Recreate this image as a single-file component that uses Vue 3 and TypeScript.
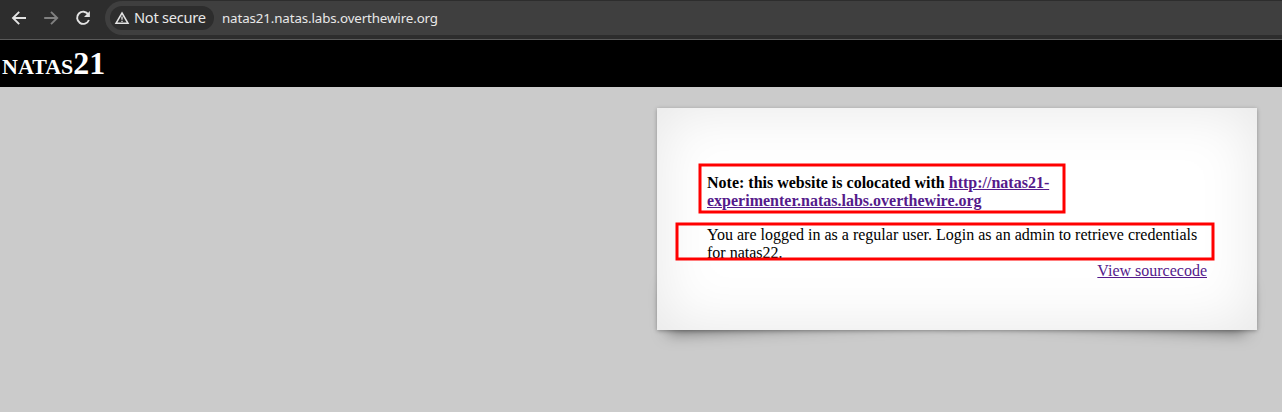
<script setup lang="ts">
const host: string = 'natas21.natas.labs.overthewire.org'
</script>

<template>
  <div class="window">
    <header class="toolbar">
      <svg class="nav" width="105" height="39" viewBox="0 0 105 39" fill="none" stroke-width="1.9">
        <path d="M26 18H13.4M19.2 11.8L13 18l6.2 6.2" stroke="#e3e3e3" />
        <path d="M44.2 18h12.6M51 11.8L57.2 18 51 24.2" stroke="#808080" />
        <path d="M88.3 14.4A6.1 6.1 0 1 0 88.9 20" stroke="#e3e3e3" />
        <path d="M89.9 11v6H84z" fill="#e3e3e3" />
      </svg>
      <div class="omnibox">
        <div class="chip">
          <svg class="warn" width="16" height="14" viewBox="0 0 16 14">
            <path d="M8 2L14 12.3H2z" fill="none" stroke="#e3e3e3" stroke-width="1.5" />
            <path d="M8 5.5v3.3M8 9.8v1.3" stroke="#e3e3e3" stroke-width="1.3" />
          </svg>
          <span class="chip-text">Not secure</span>
        </div>
        <span class="url">{{ host }}</span>
      </div>
    </header>
    <h1>natas21</h1>
    <main>
      <section class="card">
        <p class="note"><b>Note: this website is colocated with </b><a>http://natas21-experimenter.natas.labs.overthewire.org</a></p>
        <div class="status">You are logged in as a regular user. Login as an admin to retrieve credentials for natas22.</div>
        <div class="source"><a>View sourcecode</a></div>
        <svg class="frames" width="600" height="222" fill="none" stroke="#f00" stroke-width="3">
          <rect x="43" y="57" width="364" height="47" />
          <rect x="20" y="116" width="536" height="35" />
        </svg>
      </section>
    </main>
  </div>
</template>

<style>
body { margin: 0; background: #cbcbcb; }
</style>

<style scoped>
.window {
  height: 412px;
  overflow: hidden;
  background: #cbcbcb;
  font: 16px/18px "Liberation Serif", serif;
  color: #000;
}
.toolbar {
  display: flex;
  box-sizing: border-box;
  height: 40px;
  padding-top: 1px;
  background: #2d2d2d;
  border-bottom: 1px solid #5a5a5a;
  overflow: hidden;
}
.nav { flex: none; margin-top: -1px; }
.omnibox {
  display: flex;
  align-items: center;
  flex: 1;
  box-sizing: border-box;
  height: 34px;
  padding-left: 5px;
  background: #3f3f3f;
  border-radius: 17px 0 0 17px;
  font-family: "Noto Sans", sans-serif;
}
.chip {
  display: flex;
  align-items: center;
  box-sizing: border-box;
  width: 104px;
  height: 24px;
  padding-left: 4px;
  border-radius: 12px;
  background: #2d2d2d;
}
.warn { flex: none; }
.chip-text {
  margin-left: 4px;
  font-size: 14.67px;
  letter-spacing: -.28px;
  color: #e8e8e8;
  white-space: nowrap;
  position: relative;
  top: -1px;
}
.url { margin-left: 8px; font-size: 13.33px; letter-spacing: -.12px; color: #e8e8e8; }
h1 {
  box-sizing: border-box;
  height: 47px;
  margin: 0;
  padding: 5px 2px;
  background: #000;
  color: #fff;
  font-size: 32px;
  line-height: 37px;
  font-variant: small-caps;
}
main {
  position: relative;
  z-index: 0;
  display: flex;
  justify-content: flex-end;
  padding: 21px 25px 0 0;
}
.card {
  position: relative;
  width: 500px;
  height: 122px;
  padding: 50px;
  background: #fff;
  box-shadow: 0 1px 4px rgba(0, 0, 0, .3), 0 0 60px rgba(0, 0, 0, .1) inset;
}
.card::before,
.card::after {
  content: "";
  position: absolute;
  z-index: -1;
  bottom: 15px;
  left: 10px;
  width: 50%;
  height: 20%;
  max-width: 300px;
  max-height: 100px;
  box-shadow: 0 10px 16px rgba(0, 0, 0, .5);
  transform: rotate(-3deg);
}
.card::after { left: auto; right: 10px; transform: rotate(3deg); }
.note { margin: 16px 0; font-weight: bold; }
.source { text-align: right; }
a { color: #551a8b; text-decoration: underline; }
.frames { position: absolute; left: 0; top: 0; }
</style>
